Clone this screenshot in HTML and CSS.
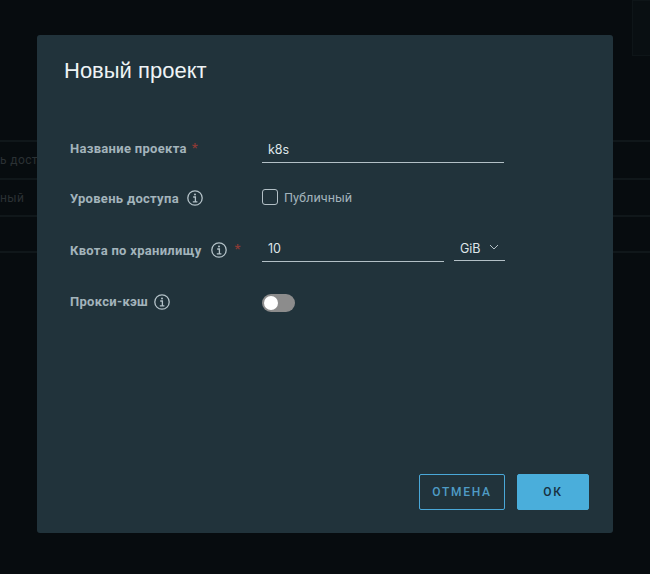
FILE: index.html
```html
<!DOCTYPE html>
<html lang="ru">
<head>
<meta charset="utf-8">
<title>Новый проект</title>
<link rel="stylesheet" href="styles.css">
</head>
<body>
<div class="page">
  <div class="corner-box"></div>
  <div class="table">
    <div class="row row-a"><span class="cell">ь доступа</span></div>
    <div class="row row-b"><span class="cell">ный</span></div>
    <div class="row row-c"></div>
  </div>
</div>
<div class="modal">
  <h1 class="title">Новый проект</h1>
  <form class="form">
    <div class="field">
      <div class="label label-name"><span>Название проекта</span><span class="req req-name">*</span></div>
      <div class="control"><div class="input input-wide">k8s</div></div>
    </div>
    <div class="field">
      <div class="label label-access"><span>Уровень доступа</span>
        <svg class="info" viewBox="0 0 16 16"><circle cx="8" cy="8" r="7.2"/><circle class="dot" cx="8" cy="4.6" r="1"/><path d="M6.2 7h2.2v4.8M5.8 11.9h4.6"/></svg>
      </div>
      <div class="control check-row"><span class="checkbox"></span><span class="check-label">Публичный</span></div>
    </div>
    <div class="field">
      <div class="label label-quota"><span>Квота по хранилищу</span>
        <svg class="info info-quota" viewBox="0 0 16 16"><circle cx="8" cy="8" r="7.2"/><circle class="dot" cx="8" cy="4.6" r="1"/><path d="M6.2 7h2.2v4.8M5.8 11.9h4.6"/></svg>
        <span class="req req-quota">*</span>
      </div>
      <div class="control quota-row">
        <div class="input input-num">10</div>
        <div class="select">GiB
          <svg class="chev" viewBox="0 0 10 6"><path d="M1 1l4 4 4-4"/></svg>
        </div>
      </div>
    </div>
    <div class="field">
      <div class="label label-proxy"><span>Прокси-кэш</span>
        <svg class="info info-proxy" viewBox="0 0 16 16"><circle cx="8" cy="8" r="7.2"/><circle class="dot" cx="8" cy="4.6" r="1"/><path d="M6.2 7h2.2v4.8M5.8 11.9h4.6"/></svg>
      </div>
      <div class="control toggle-wrap"><span class="toggle"><span class="knob"></span></span></div>
    </div>
  </form>
  <div class="actions">
    <button type="button" class="btn btn-outline">ОТМЕНА</button>
    <button type="button" class="btn btn-primary">ОК</button>
  </div>
</div>
</body>
</html>
```
FILE: styles.css
```css
* { box-sizing: border-box; }
html, body { margin: 0; height: 574px; overflow: hidden; }
body {
  background: #070c0f;
  font-family: Roboto, "Liberation Sans", sans-serif;
  position: relative;
}
.page { height: 574px; position: relative; overflow: hidden; }
.corner-box {
  position: absolute;
  top: 0;
  right: -10px;
  width: 28px;
  height: 56px;
  border: 1px solid #0e1518;
  background: #090f12;
}
.table { padding-top: 140px; }
.row { border-top: 2px solid #10171a; display: flex; align-items: center; overflow: hidden; }
.row-a { height: 38px; }
.row-b { height: 37px; }
.row-c { height: 38px; border-bottom: 2px solid #10171a; }
.cell { font-size: 12px; color: #2b3134; white-space: nowrap; letter-spacing: .4px; }

.modal {
  position: absolute;
  left: 37px;
  top: 35px;
  width: 576px;
  height: 498px;
  background: #21333b;
  border-radius: 3px;
  padding: 22px 24px 23px 27px;
  display: flex;
  flex-direction: column;
}
.title {
  margin: 0;
  font-family: "Liberation Sans", Arial, sans-serif;
  font-size: 22px;
  font-weight: 400;
  line-height: 28px;
  color: #eef3f5;
}
.form { margin-top: 52px; flex: 1; padding-left: 6px; }
.field { display: flex; align-items: center; height: 26px; margin-bottom: 23.5px; }
.label {
  width: 192px;
  flex: none;
  font-size: 13px;
  font-weight: 700;
  letter-spacing: .3px;
  color: #a3b4bb;
  display: flex;
  align-items: center;
  white-space: nowrap;
}
.label-name { margin-top: -4px; }
.label-access { margin-top: -3px; }
.label-quota { margin-top: 2px; }
.label-proxy { margin-top: 6px; }
.req { color: #8b3a35; font-size: 13px; }
.req-name { margin-left: 5px; margin-top: -2px; }
.req-quota { margin-left: 8px; margin-top: -4px; }
.info { width: 16px; height: 16px; margin-left: 8px; fill: none; stroke: #b4c2c8; stroke-width: 1.3; flex: none; }
.info-quota { margin-left: 9px; }
.info-proxy { margin-left: 6px; }
.info .dot { fill: #b4c2c8; stroke: none; }
.control { flex: none; }
.input {
  height: 26px;
  border-bottom: 1px solid #b3c0c6;
  color: #dfe6e9;
  font-family: Inter, Roboto, sans-serif;
  font-size: 12.5px;
  line-height: 26px;
  padding-left: 6px;
}
.input-wide { width: 242px; }
.input-num { width: 182px; }
.quota-row { display: flex; gap: 10px; }
.select {
  width: 51px;
  height: 25px;
  border-bottom: 1px solid #b3c0c6;
  color: #dfe6e9;
  font-family: Inter, Roboto, sans-serif;
  font-size: 12.5px;
  line-height: 24px;
  padding: 2px 0 0 6px;
  display: flex;
  align-items: center;
  gap: 8px;
}
.chev { width: 10px; height: 6px; fill: none; stroke: #b3c0c6; stroke-width: 1; margin-top: -4px; }
.check-row { display: flex; align-items: center; gap: 6px; margin-top: -5px; }
.checkbox { width: 16px; height: 16px; border: 1px solid #b3c0c6; border-radius: 3px; }
.check-label { font-size: 12.7px; color: #a3b4bb; }
.toggle-wrap { margin-top: 9px; }
.toggle {
  display: block;
  width: 33px;
  height: 18px;
  border-radius: 9px;
  background: #8c8c8c;
  padding: 2px;
}
.knob { display: block; width: 14px; height: 14px; border-radius: 50%; background: #fff; }
.actions { display: flex; justify-content: flex-end; gap: 12px; }
.btn {
  width: 86px;
  height: 36px;
  border-radius: 2px;
  font-family: Roboto, "Liberation Sans", sans-serif;
  font-size: 12px;
  font-weight: 500;
  letter-spacing: 1.7px;
  padding: 0;
}
.btn-outline { background: transparent; border: 1px solid #4aa8d8; color: #4f9cc6; }
.btn-primary { width: 72px; background: #4aaedb; border: 1px solid #4aaedb; color: #17303f; }
```
